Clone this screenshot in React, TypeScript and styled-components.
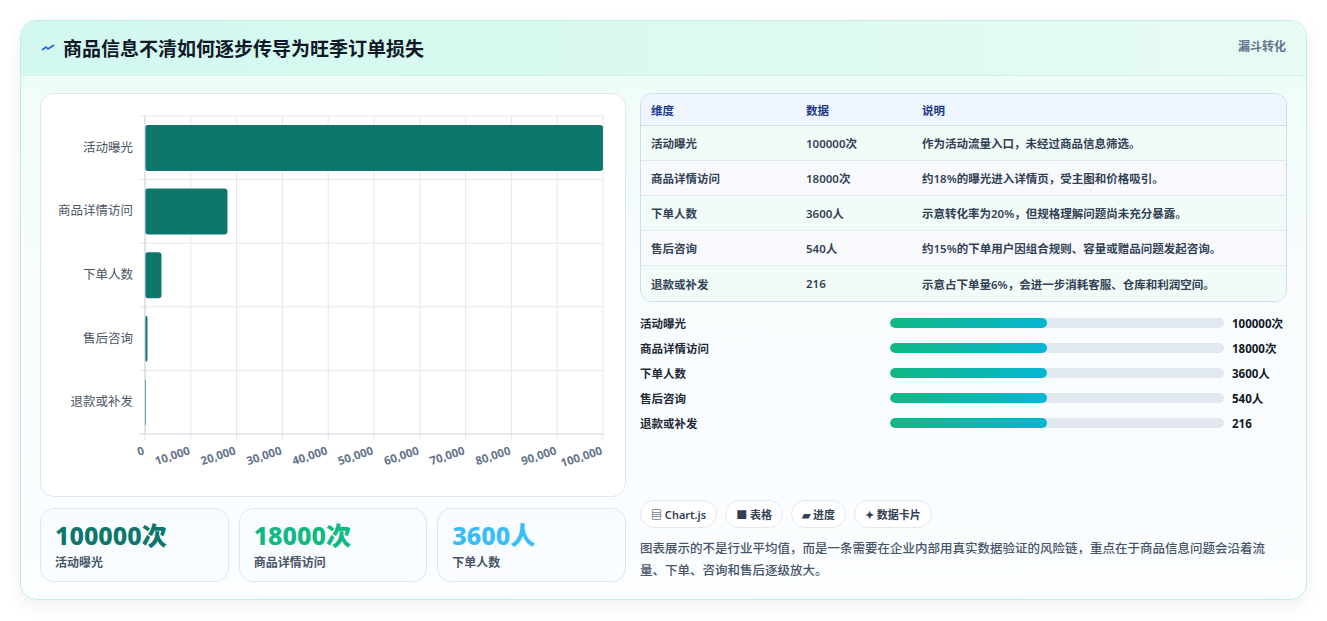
import React from 'react';
import styled, { createGlobalStyle } from 'styled-components';

const GlobalStyle = createGlobalStyle`
  * { box-sizing: border-box; }
  body {
    margin: 0;
    background: #f1f3f4;
    font-family: "Noto Sans", "Noto Sans CJK SC", sans-serif;
  }
`;

const rows = [
  { name: '活动曝光', value: 100000, data: '100000次', note: '作为活动流量入口，未经过商品信息筛选。' },
  { name: '商品详情访问', value: 18000, data: '18000次', note: '约18%的曝光进入详情页，受主图和价格吸引。' },
  { name: '下单人数', value: 3600, data: '3600人', note: '示意转化率为20%，但规格理解问题尚未充分暴露。' },
  { name: '售后咨询', value: 540, data: '540人', note: '约15%的下单用户因组合规则、容量或赠品问题发起咨询。' },
  { name: '退款或补发', value: 216, data: '216', note: '示意占下单量6%，会进一步消耗客服、仓库和利润空间。' },
];

const Page = styled.div`
  padding: 20px 20px 22px 20px;
  background: #fff;
  height: 621px;
`;

const Card = styled.div`
  border: 1px solid #bfeee6;
  border-radius: 16px;
  overflow: hidden;
  background: linear-gradient(180deg, #ecfdf7 0%, #f8fcfd 45%, #fbfdff 100%);
  box-shadow: 0 6px 18px rgba(0, 0, 0, 0.06);
`;

const Header = styled.div`
  height: 55px;
  display: flex;
  align-items: center;
  justify-content: space-between;
  padding: 0 20px;
  background: linear-gradient(90deg, #d2f8ef 0%, #dcfaf1 60%, #e8fbf4 100%);
  border-bottom: 1px solid #d6f1ea;
`;

const Title = styled.h1`
  margin: 0;
  font-size: 19px;
  font-weight: 700;
  color: #111827;
  display: flex;
  align-items: center;
  gap: 8px;
`;

const Tag = styled.span`
  font-size: 12px;
  font-weight: 700;
  color: #64748b;
  align-self: flex-start;
  margin-top: 16px;
`;

const Body = styled.div`
  display: grid;
  grid-template-columns: 586px 1fr;
  gap: 14px;
  padding: 17px 19px 17px 19px;
`;

const Column = styled.div`
  display: flex;
  flex-direction: column;
`;

const ChartBox = styled.div`
  height: 404px;
  background: #fff;
  border: 1px solid #dfe7f1;
  border-radius: 14px;
`;

const Stats = styled.div`
  margin-top: 11px;
  display: grid;
  grid-template-columns: repeat(3, 1fr);
  gap: 10px;
`;

const Stat = styled.div`
  height: 74px;
  border: 1px solid #dbe7f5;
  border-radius: 14px;
  background: linear-gradient(180deg, #f7fbff, #fbfdff);
  padding: 10px 14px;
`;

const StatValue = styled.div<{ $color: string }>`
  font-size: 25px;
  font-weight: 800;
  color: ${p => p.$color};
  line-height: 32px;
`;

const StatLabel = styled.div`
  font-size: 12px;
  font-weight: 600;
  color: #475569;
  margin-top: 2px;
`;

const Table = styled.table`
  width: 100%;
  border-collapse: separate;
  border-spacing: 0;
  border: 1px solid #cfdcec;
  border-radius: 12px;
  overflow: hidden;
  font-size: 11.5px;
  font-weight: 600;
  color: #334155;
`;

const Th = styled.th<{ $w?: number }>`
  text-align: left;
  height: 32px;
  padding: 0 10px;
  background: #eef5fe;
  color: #1e3a8a;
  font-weight: 700;
  border-bottom: 1px solid #cfdcec;
  width: ${p => (p.$w ? `${p.$w}px` : 'auto')};
`;

const Td = styled.td<{ $alt: boolean; $last: boolean }>`
  height: 35px;
  padding: 0 10px;
  background: ${p => (p.$alt ? '#f7f9fd' : '#f1fbf7')};
  border-bottom: ${p => (p.$last ? 'none' : '1px solid #e2e8f0')};
`;

const Bars = styled.div`
  margin-top: 12px;
  display: flex;
  flex-direction: column;
  gap: 7px;
`;

const BarRow = styled.div`
  display: grid;
  grid-template-columns: 242px 334px 1fr;
  gap: 8px;
  align-items: center;
  height: 18px;
  font-size: 11.5px;
  font-weight: 600;
  color: #1f2937;
`;

const Track = styled.div`
  height: 10px;
  border-radius: 5px;
  background: #e2e8f0;
  overflow: hidden;
`;

const Fill = styled.div`
  height: 100%;
  border-radius: 5px;
  background: linear-gradient(90deg, #10b981, #06b6d4);
`;

const BarValue = styled.span`
  font-weight: 700;
  color: #111827;
`;

const Chips = styled.div`
  margin-top: auto;
  display: flex;
  gap: 8px;
`;

const Chip = styled.span`
  height: 28px;
  padding: 0 10px;
  display: inline-flex;
  align-items: center;
  gap: 4px;
  border: 1px solid #e2e8f0;
  border-radius: 14px;
  background: #fff;
  font-size: 11px;
  font-weight: 600;
  color: #334155;
`;

const Note = styled.p`
  margin: 10px 0 0;
  font-size: 12.5px;
  line-height: 22px;
  color: #475569;
  font-weight: 500;
`;

const Chart: React.FC = () => {
  const x0 = 104, x1 = 562, top = 22, h = 318;
  const rowH = h / rows.length;
  const ticks = Array.from({ length: 11 }, (_, i) => i * 10000);
  return (
    <svg width="586" height="404" style={{ display: 'block' }}>
      {ticks.map(t => {
        const x = x0 + ((x1 - x0) * t) / 100000;
        return (
          <g key={t}>
            <line x1={x} y1={top} x2={x} y2={top + h + 6} stroke="#e5e7eb" />
            <text
              x={x}
              y={top + h + 20}
              fontSize="11.5"
              fontWeight="700"
              fill="#64748b"
              textAnchor="end"
              transform={`rotate(-18 ${x} ${top + h + 20})`}
              fontFamily="Noto Sans, sans-serif"
            >
              {t.toLocaleString('en-US')}
            </text>
          </g>
        );
      })}
      {rows.map((r, i) => {
        const y = top + i * rowH;
        const w = ((x1 - x0) * r.value) / 100000;
        return (
          <g key={r.name}>
            <line x1={x0 - 6} y1={y} x2={x1} y2={y} stroke="#e5e7eb" />
            <rect x={x0} y={y + 9} width={Math.max(w, 1)} height={46} rx="3" fill="#0f766e" />
            <text
              x={x0 - 12}
              y={y + rowH / 2 + 4}
              fontSize="12.5"
              fill="#4b5563"
              textAnchor="end"
              fontFamily="Noto Sans CJK SC, sans-serif"
            >
              {r.name}
            </text>
          </g>
        );
      })}
      <line x1={x0 - 6} y1={top + h} x2={x1} y2={top + h} stroke="#cbd5e1" />
      <line x1={x0} y1={top} x2={x0} y2={top + h} stroke="#cbd5e1" />
    </svg>
  );
};

const App: React.FC = () => (
  <>
    <GlobalStyle />
    <Page>
      <Card>
        <Header>
          <Title>
            <svg width="14" height="10" viewBox="0 0 14 10">
              <path d="M1 7 L5 4 L7 6 L13 2" stroke="#2563eb" strokeWidth="1.6" fill="none" />
            </svg>
            商品信息不清如何逐步传导为旺季订单损失
          </Title>
          <Tag>漏斗转化</Tag>
        </Header>
        <Body>
          <Column>
            <ChartBox>
              <Chart />
            </ChartBox>
            <Stats>
              <Stat>
                <StatValue $color="#0f766e">100000次</StatValue>
                <StatLabel>活动曝光</StatLabel>
              </Stat>
              <Stat>
                <StatValue $color="#10b981">18000次</StatValue>
                <StatLabel>商品详情访问</StatLabel>
              </Stat>
              <Stat>
                <StatValue $color="#38bdf8">3600人</StatValue>
                <StatLabel>下单人数</StatLabel>
              </Stat>
            </Stats>
          </Column>
          <Column>
            <Table>
              <thead>
                <tr>
                  <Th $w={155}>维度</Th>
                  <Th $w={116}>数据</Th>
                  <Th>说明</Th>
                </tr>
              </thead>
              <tbody>
                {rows.map((r, i) => (
                  <tr key={r.name}>
                    <Td $alt={i % 2 === 1} $last={i === rows.length - 1}>{r.name}</Td>
                    <Td $alt={i % 2 === 1} $last={i === rows.length - 1}>{r.data}</Td>
                    <Td $alt={i % 2 === 1} $last={i === rows.length - 1}>{r.note}</Td>
                  </tr>
                ))}
              </tbody>
            </Table>
            <Bars>
              {rows.map(r => (
                <BarRow key={r.name}>
                  <span>{r.name}</span>
                  <Track>
                    <Fill style={{ width: '47%' }} />
                  </Track>
                  <BarValue>{r.data}</BarValue>
                </BarRow>
              ))}
            </Bars>
            <Chips>
              <Chip>▤ Chart.js</Chip>
              <Chip>■ 表格</Chip>
              <Chip>▰ 进度</Chip>
              <Chip>✦ 数据卡片</Chip>
            </Chips>
            <Note>
              图表展示的不是行业平均值，而是一条需要在企业内部用真实数据验证的风险链，重点在于商品信息问题会沿着流量、下单、咨询和售后逐级放大。
            </Note>
          </Column>
        </Body>
      </Card>
    </Page>
  </>
);

export default App;
